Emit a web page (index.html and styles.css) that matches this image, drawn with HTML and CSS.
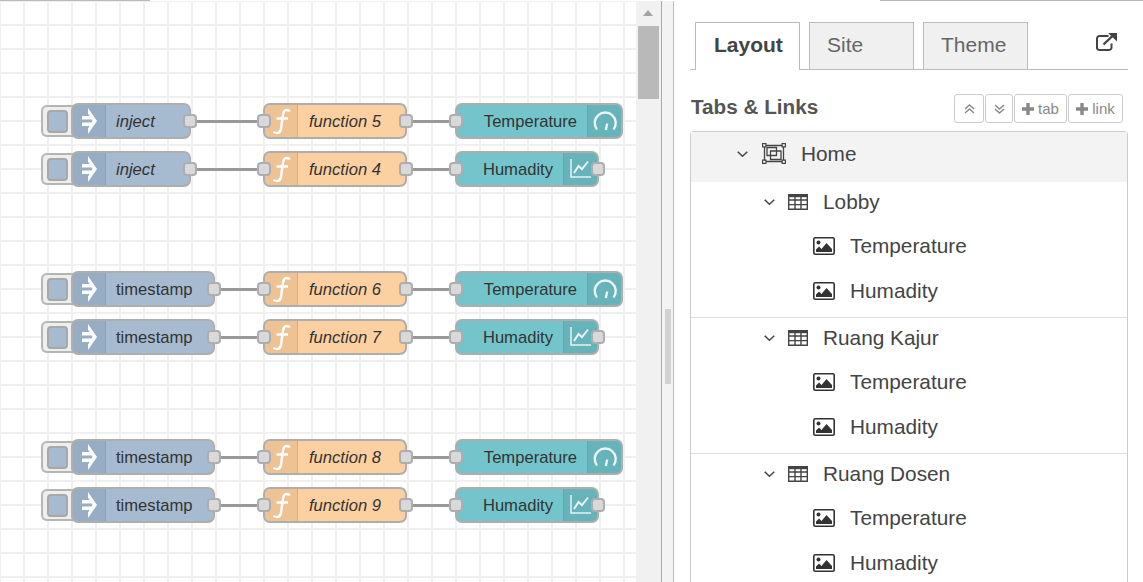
FILE: index.html
```html
<!DOCTYPE html>
<html lang="en">
<head>
    <meta charset="UTF-8">
    <title>Node-RED Dashboard</title>
    <link rel="stylesheet" href="styles.css">
</head>
<body>
    <svg class="defs" width="0" height="0">
        <symbol id="i-inject" viewBox="0 0 15 26">
            <path d="M0 8h10v3.500H0zM0 14.500h10V18H0z"/>
            <path d="M6 0L15 13 6 26V20.500L10.500 13 6 5.500z"/>
        </symbol>
        <symbol id="i-func" viewBox="0 0 35 36">
            <path d="M26 8C21.500 5.500 19.500 8 19 12L17 25.500C16.500 30 13.500 31 9.500 29M12.500 15.500H24" fill="none" stroke="#fff" stroke-width="2.400"/>
        </symbol>
        <symbol id="i-gauge" viewBox="0 0 36 36">
            <path d="M10 26.500A10.500 10.500 0 1 1 26.500 26.500M18.800 27L20.200 20.500" fill="none" stroke="#eaf6f7" stroke-width="2.400"/>
        </symbol>
        <symbol id="i-chart" viewBox="0 0 36 36">
            <path d="M8 8V26H28" fill="none" stroke="#e3f3f4" stroke-width="1.500"/>
            <path d="M11 22L15.500 15 19 18 25 10.500" fill="none" stroke="#eaf6f7" stroke-width="2"/>
        </symbol>
        <symbol id="i-chevron" viewBox="0 0 11 6">
            <path d="M.7.7L5.500 5.200 10.300.7" fill="none" stroke="#444" stroke-width="1.500"/>
        </symbol>
        <symbol id="i-group" viewBox="0 0 24 21">
            <path d="M2.500 2.500H21.500V18.500H2.500z" fill="none" stroke="#444" stroke-width="1.300"/>
            <path d="M.6.6h3.300v3.300H.6zM20.100.6h3.300v3.300h-3.300zM.6 17.100h3.300v3.300H.6zM20.100 17.100h3.300v3.300h-3.300z" fill="#fff" stroke="#444" stroke-width="1.200"/>
            <path d="M5 4.500H14.500V12.500H5zM8.500 8H19V16.500H8.500z" fill="none" stroke="#444" stroke-width="1.300"/>
        </symbol>
        <symbol id="i-table" viewBox="0 0 20 16">
            <path d="M.7.7H19.300V15.300H.7zM.7 6H19.300M.7 10.600H19.300M7 3V15.300M13 3V15.300" fill="none" stroke="#444" stroke-width="1.400"/>
            <path d="M.7.7H19.300V3.200H.7z" fill="#444"/>
        </symbol>
        <symbol id="i-image" viewBox="0 0 22 18">
            <rect x=".8" y=".8" width="20.400" height="16.400" rx="1.500" fill="none" stroke="#333" stroke-width="1.600"/>
            <circle cx="5.500" cy="5.500" r="2" fill="#333"/>
            <path d="M3 15V12.500L6 9.500 8.500 12 13.500 6 19 12V15z" fill="#333"/>
        </symbol>
        <symbol id="i-external" viewBox="0 0 21 18">
            <path d="M12.500 3H3.500A2.500 2.500 0 0 0 1 5.500V15A2.500 2.500 0 0 0 3.500 17H13A2.500 2.500 0 0 0 15.500 15V10.500" fill="none" stroke="#444" stroke-width="2"/>
            <path d="M7.500 11.500L17 2.500" fill="none" stroke="#444" stroke-width="2.400"/>
            <path d="M12 0H21V8.500z" fill="#444"/>
        </symbol>
        <symbol id="i-up" viewBox="0 0 11 10">
            <path d="M1 5L5.500 1 10 5M1 9L5.500 5 10 9" fill="none" stroke="#888" stroke-width="1.400"/>
        </symbol>
        <symbol id="i-down" viewBox="0 0 11 10">
            <path d="M1 1L5.500 5 10 1M1 5L5.500 9 10 5" fill="none" stroke="#888" stroke-width="1.400"/>
        </symbol>
        <symbol id="i-plus" viewBox="0 0 12 12">
            <path d="M4.300 0H7.700V4.300H12V7.700H7.700V12H4.300V7.700H0V4.300H4.300z" fill="#888"/>
        </symbol>
    </svg>

    <div class="topline"></div>

    <div class="main">
        <div class="workspace">
            <div class="canvas">
                <div class="flow-group">
                    <div class="flow">
                        <span class="inject-btn"><span></span></span>
                        <div class="node inject w-120"><span class="node-icon"><svg class="ic-inject"><use href="#i-inject"/></svg></span><span class="label italic">inject</span><span class="port out"></span></div>
                        <span class="wire w-72"></span>
                        <div class="node func"><span class="port in"></span><span class="node-icon"><svg class="ic-func"><use href="#i-func"/></svg></span><span class="label italic">function 5</span><span class="port out"></span></div>
                        <span class="wire"></span>
                        <div class="node dash gauge"><span class="port in"></span><span class="label right">Temperature</span><span class="node-icon end"><svg class="ic-dash"><use href="#i-gauge"/></svg></span></div>
                    </div>
                    <div class="flow">
                        <span class="inject-btn"><span></span></span>
                        <div class="node inject w-120"><span class="node-icon"><svg class="ic-inject"><use href="#i-inject"/></svg></span><span class="label italic">inject</span><span class="port out"></span></div>
                        <span class="wire w-72"></span>
                        <div class="node func"><span class="port in"></span><span class="node-icon"><svg class="ic-func"><use href="#i-func"/></svg></span><span class="label italic">function 4</span><span class="port out"></span></div>
                        <span class="wire"></span>
                        <div class="node dash chart"><span class="port in"></span><span class="label right">Humadity</span><span class="node-icon end"><svg class="ic-dash"><use href="#i-chart"/></svg></span><span class="port out"></span></div>
                    </div>
                </div>

                <div class="flow-group">
                    <div class="flow">
                        <span class="inject-btn"><span></span></span>
                        <div class="node inject"><span class="node-icon"><svg class="ic-inject"><use href="#i-inject"/></svg></span><span class="label">timestamp</span><span class="port out"></span></div>
                        <span class="wire"></span>
                        <div class="node func"><span class="port in"></span><span class="node-icon"><svg class="ic-func"><use href="#i-func"/></svg></span><span class="label italic">function 6</span><span class="port out"></span></div>
                        <span class="wire"></span>
                        <div class="node dash gauge"><span class="port in"></span><span class="label right">Temperature</span><span class="node-icon end"><svg class="ic-dash"><use href="#i-gauge"/></svg></span></div>
                    </div>
                    <div class="flow">
                        <span class="inject-btn"><span></span></span>
                        <div class="node inject"><span class="node-icon"><svg class="ic-inject"><use href="#i-inject"/></svg></span><span class="label">timestamp</span><span class="port out"></span></div>
                        <span class="wire"></span>
                        <div class="node func"><span class="port in"></span><span class="node-icon"><svg class="ic-func"><use href="#i-func"/></svg></span><span class="label italic">function 7</span><span class="port out"></span></div>
                        <span class="wire"></span>
                        <div class="node dash chart"><span class="port in"></span><span class="label right">Humadity</span><span class="node-icon end"><svg class="ic-dash"><use href="#i-chart"/></svg></span><span class="port out"></span></div>
                    </div>
                </div>

                <div class="flow-group">
                    <div class="flow">
                        <span class="inject-btn"><span></span></span>
                        <div class="node inject"><span class="node-icon"><svg class="ic-inject"><use href="#i-inject"/></svg></span><span class="label">timestamp</span><span class="port out"></span></div>
                        <span class="wire"></span>
                        <div class="node func"><span class="port in"></span><span class="node-icon"><svg class="ic-func"><use href="#i-func"/></svg></span><span class="label italic">function 8</span><span class="port out"></span></div>
                        <span class="wire"></span>
                        <div class="node dash gauge"><span class="port in"></span><span class="label right">Temperature</span><span class="node-icon end"><svg class="ic-dash"><use href="#i-gauge"/></svg></span></div>
                    </div>
                    <div class="flow">
                        <span class="inject-btn"><span></span></span>
                        <div class="node inject"><span class="node-icon"><svg class="ic-inject"><use href="#i-inject"/></svg></span><span class="label">timestamp</span><span class="port out"></span></div>
                        <span class="wire"></span>
                        <div class="node func"><span class="port in"></span><span class="node-icon"><svg class="ic-func"><use href="#i-func"/></svg></span><span class="label italic">function 9</span><span class="port out"></span></div>
                        <span class="wire"></span>
                        <div class="node dash chart"><span class="port in"></span><span class="label right">Humadity</span><span class="node-icon end"><svg class="ic-dash"><use href="#i-chart"/></svg></span><span class="port out"></span></div>
                    </div>
                </div>
            </div>
            <div class="scrollbar">
                <span class="scroll-arrow"></span>
                <span class="scroll-thumb"></span>
            </div>
        </div>

        <div class="gutter"><span class="grip"></span></div>

        <div class="sidebar">
            <div class="tabs">
                <a class="tab active">Layout</a>
                <a class="tab">Site</a>
                <a class="tab">Theme</a>
                <svg class="ic-external"><use href="#i-external"/></svg>
            </div>

            <div class="section-head">
                <h2>Tabs &amp; Links</h2>
                <div class="actions">
                    <button class="btn btn-icon"><svg class="ic-arrows"><use href="#i-up"/></svg></button>
                    <button class="btn btn-icon"><svg class="ic-arrows"><use href="#i-down"/></svg></button>
                    <button class="btn btn-tab"><svg class="ic-plus"><use href="#i-plus"/></svg>tab</button>
                    <button class="btn btn-link"><svg class="ic-plus"><use href="#i-plus"/></svg>link</button>
                </div>
            </div>

            <div class="tree">
                <div class="tree-home">
                    <svg class="ic-chevron"><use href="#i-chevron"/></svg>
                    <svg class="ic-group"><use href="#i-group"/></svg>
                    <span>Home</span>
                </div>

                <div class="tree-group">
                    <div class="group-row">
                        <svg class="ic-chevron"><use href="#i-chevron"/></svg>
                        <svg class="ic-table"><use href="#i-table"/></svg>
                        <span>Lobby</span>
                    </div>
                    <div class="item-row"><svg class="ic-image"><use href="#i-image"/></svg><span>Temperature</span></div>
                    <div class="item-row"><svg class="ic-image"><use href="#i-image"/></svg><span>Humadity</span></div>
                </div>

                <div class="tree-group">
                    <div class="group-row">
                        <svg class="ic-chevron"><use href="#i-chevron"/></svg>
                        <svg class="ic-table"><use href="#i-table"/></svg>
                        <span>Ruang Kajur</span>
                    </div>
                    <div class="item-row"><svg class="ic-image"><use href="#i-image"/></svg><span>Temperature</span></div>
                    <div class="item-row"><svg class="ic-image"><use href="#i-image"/></svg><span>Humadity</span></div>
                </div>

                <div class="tree-group">
                    <div class="group-row">
                        <svg class="ic-chevron"><use href="#i-chevron"/></svg>
                        <svg class="ic-table"><use href="#i-table"/></svg>
                        <span>Ruang Dosen</span>
                    </div>
                    <div class="item-row"><svg class="ic-image"><use href="#i-image"/></svg><span>Temperature</span></div>
                    <div class="item-row"><svg class="ic-image"><use href="#i-image"/></svg><span>Humadity</span></div>
                </div>
            </div>
        </div>
    </div>
</body>
</html>
```

FILE: styles.css
```css
* {
    box-sizing: border-box;
}
html, body {
    height: 100%;
}
body {
    margin: 0;
    display: flex;
    flex-direction: column;
    overflow: hidden;
    background: #fff;
    color: #333;
    font-family: "Liberation Sans", Arial, sans-serif;
}
.defs {
    display: none;
}
svg {
    display: block;
    flex: none;
}

/* top edge */
.topline {
    flex: none;
    height: 1px;
    background: linear-gradient(to right, #bbb 150px, #fff 150px, #fff 880px, #bbb 880px);
}
.main {
    flex: 1;
    display: flex;
    min-height: 0;
}

/* workspace */
.workspace {
    flex: none;
    width: 662px;
    display: flex;
    border-right: 1px solid #aaa;
}
.canvas {
    flex: 1;
    padding: 102px 0 0 41px;
    overflow: hidden;
    background-color: #fff;
    background-image:
        linear-gradient(to right, #efefef 2px, transparent 2px),
        linear-gradient(to bottom, #efefef 2px, transparent 2px);
    background-size: 24px 24px;
    background-position: 23px 0, 0 23px;
}
.flow-group {
    display: flex;
    flex-direction: column;
    gap: 12px;
    margin-bottom: 84px;
}
.flow {
    display: flex;
    align-items: center;
    height: 36px;
}
.wire {
    flex: none;
    width: 48px;
    height: 3px;
    background: #999;
}
.wire.w-72 {
    width: 72px;
}
.inject-btn {
    flex: none;
    width: 32px;
    height: 32px;
    margin-right: -2px;
    padding: 3px 0 0 4px;
    background: #eee;
    border: 2px solid #b5b5b5;
    border-right: none;
    border-radius: 6px 0 0 6px;
}
.inject-btn span {
    display: block;
    width: 21px;
    height: 23px;
    background: #a6bbcf;
    border: 2px solid #a8a8a8;
    border-radius: 4px;
}
.node {
    position: relative;
    flex: none;
    display: flex;
    align-items: center;
    width: 144px;
    height: 36px;
    border: 2px solid #aeaeae;
    border-radius: 7px;
    font-size: 16.6px;
    color: #333;
}
.node.w-120 {
    width: 120px;
}
.node.gauge {
    width: 168px;
}
.node.inject {
    background: #a6bbcf;
}
.node.func {
    background: #fdd0a2;
}
.node.dash {
    background: #74c5cb;
}
.node-icon {
    flex: none;
    display: flex;
    align-items: center;
    justify-content: center;
    width: 33px;
    height: 100%;
    border-right: 1px solid #8fa3b8;
    border-radius: 5px 0 0 5px;
}
.inject .node-icon {
    background: #96adc4;
}
.func .node-icon {
    background: #eec293;
    border-right-color: #d9ae80;
}
.dash .node-icon {
    width: 34px;
    background: #66b3ba;
    border-right: none;
    border-left: 1px solid #5fa5ab;
    border-radius: 0 5px 5px 0;
}
.ic-inject {
    width: 15px;
    height: 26px;
    fill: #fff;
}
.ic-func {
    width: 35px;
    height: 36px;
}
.ic-dash {
    width: 36px;
    height: 36px;
}
.label {
    flex: 1;
    padding: 1px 0 0 10px;
    white-space: nowrap;
}
.func .label {
    padding-left: 11px;
}
.label.italic {
    font-style: italic;
}
.label.right {
    padding: 1px 10px 0 0;
    text-align: right;
}
.port {
    position: absolute;
    top: 9px;
    width: 14px;
    height: 14px;
    background: #d9d9d9;
    border: 2px solid #aeaeae;
    border-radius: 4px;
}
.port.in {
    left: -8px;
}
.port.out {
    right: -8px;
}
.scrollbar {
    flex: none;
    position: relative;
    width: 25px;
    padding: 25px 2px 0;
    background: #f1f1f1;
}
.scroll-arrow {
    position: absolute;
    top: 9px;
    left: 7px;
    border-left: 5.5px solid transparent;
    border-right: 5.5px solid transparent;
    border-bottom: 6px solid #a3a3a3;
}
.scroll-thumb {
    display: block;
    height: 73px;
    background: #b9b9b9;
}

/* splitter */
.gutter {
    flex: none;
    width: 12px;
    padding: 308px 3px 0;
    background: #f3f3f3;
    border-right: 1px solid #bbb;
}
.grip {
    display: block;
    width: 6px;
    height: 75px;
    background: #d2d2d2;
}

/* sidebar */
.sidebar {
    flex: 1;
    min-width: 0;
    padding: 21px 15px 0 16px;
}
.tabs {
    display: flex;
    align-items: flex-start;
    gap: 9px;
    height: 48px;
    padding-left: 5px;
    border-bottom: 1px solid #bbb;
}
.tab {
    width: 105px;
    height: 47px;
    padding: 10px 0 0 17px;
    background: #f0f0f0;
    border: 1px solid #bbb;
    border-bottom: none;
    font-size: 21px;
    line-height: 24px;
    color: #666;
}
.tab.active {
    height: 48px;
    padding-left: 18px;
    background: #fff;
    font-weight: bold;
    color: #444;
}
.ic-external {
    width: 21px;
    height: 18px;
    margin: 11px 11px 0 auto;
}
.section-head {
    display: flex;
    align-items: center;
    justify-content: space-between;
    height: 29px;
    margin: 24px 5px 8px 1px;
}
.section-head h2 {
    margin: -4px 0 0;
    font-size: 20.7px;
    font-weight: bold;
    color: #555;
}
.actions {
    display: flex;
    gap: 1px;
}
.btn {
    display: flex;
    align-items: center;
    justify-content: center;
    height: 29px;
    padding: 0;
    background: #fff;
    border: 1px solid #ccc;
    border-radius: 3px;
    font-family: inherit;
    font-size: 15px;
    color: #888;
}
.btn-icon {
    width: 30px;
}
.btn-icon + .btn-icon {
    width: 28px;
}
.btn-tab {
    width: 53px;
}
.btn-link {
    width: 55px;
}
.ic-arrows {
    width: 11px;
    height: 10px;
}
.ic-plus {
    width: 12px;
    height: 12px;
    margin-right: 4px;
}
.tree {
    border: 1px solid #ccc;
    border-bottom: none;
    border-radius: 4px 4px 0 0;
    font-size: 20.8px;
    color: #444;
}
.tree-home {
    display: flex;
    align-items: center;
    height: 50px;
    padding: 0 0 7px 46px;
    background: #f3f3f3;
}
.ic-chevron {
    width: 11px;
    height: 6px;
}
.ic-group {
    width: 24px;
    height: 21px;
    margin: 0 15px 0 14px;
}
.tree-group {
    padding-bottom: 4px;
    border-bottom: 1px solid #ddd;
}
.group-row {
    display: flex;
    align-items: center;
    height: 41px;
    padding: 0 0 2px 73px;
}
.ic-table {
    width: 20px;
    height: 16px;
    margin: 0 15px 0 13px;
}
.item-row {
    display: flex;
    align-items: center;
    height: 45px;
    padding-left: 122px;
}
.ic-image {
    width: 22px;
    height: 18px;
    margin-right: 15px;
}
```
